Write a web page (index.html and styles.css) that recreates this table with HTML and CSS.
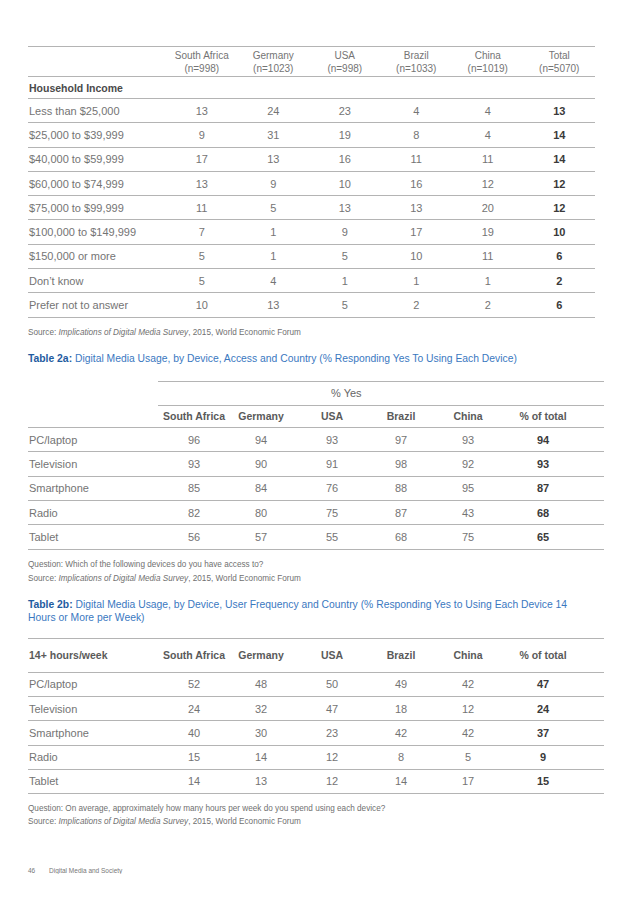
FILE: index.html
```html
<!DOCTYPE html>
<html>
<head>
<meta charset="utf-8">
<link rel="stylesheet" href="styles.css">
</head>
<body>
<div class="page">
  <div class="t1">
    <div class="r1 head">
      <div></div>
      <div>South Africa<br>(n=998)</div>
      <div>Germany<br>(n=1023)</div>
      <div>USA<br>(n=998)</div>
      <div>Brazil<br>(n=1033)</div>
      <div>China<br>(n=1019)</div>
      <div>Total<br>(n=5070)</div>
    </div>
    <div class="r1 group"><div class="lbl">Household Income</div></div>
    <div class="r1 data"><div class="lbl">Less than $25,000</div><div>13</div><div>24</div><div>23</div><div>4</div><div>4</div><div class="tot">13</div></div>
    <div class="r1 data"><div class="lbl">$25,000 to $39,999</div><div>9</div><div>31</div><div>19</div><div>8</div><div>4</div><div class="tot">14</div></div>
    <div class="r1 data"><div class="lbl">$40,000 to $59,999</div><div>17</div><div>13</div><div>16</div><div>11</div><div>11</div><div class="tot">14</div></div>
    <div class="r1 data"><div class="lbl">$60,000 to $74,999</div><div>13</div><div>9</div><div>10</div><div>16</div><div>12</div><div class="tot">12</div></div>
    <div class="r1 data"><div class="lbl">$75,000 to $99,999</div><div>11</div><div>5</div><div>13</div><div>13</div><div>20</div><div class="tot">12</div></div>
    <div class="r1 data"><div class="lbl">$100,000 to $149,999</div><div>7</div><div>1</div><div>9</div><div>17</div><div>19</div><div class="tot">10</div></div>
    <div class="r1 data"><div class="lbl">$150,000 or more</div><div>5</div><div>1</div><div>5</div><div>10</div><div>11</div><div class="tot">6</div></div>
    <div class="r1 data"><div class="lbl">Don’t know</div><div>5</div><div>4</div><div>1</div><div>1</div><div>1</div><div class="tot">2</div></div>
    <div class="r1 data"><div class="lbl">Prefer not to answer</div><div>10</div><div>13</div><div>5</div><div>2</div><div>2</div><div class="tot">6</div></div>
  </div>
  <p class="note src1">Source: <i>Implications of Digital Media Survey</i>, 2015, World Economic Forum</p>

  <p class="title t2a-title"><b>Table 2a:</b> Digital Media Usage, by Device, Access and Country (% Responding Yes To Using Each Device)</p>
  <div class="t2 t2a">
    <div class="r2 yes"><div></div><div class="yescell">% Yes</div></div>
    <div class="r2 head2"><div></div><div>South Africa</div><div>Germany</div><div>USA</div><div>Brazil</div><div>China</div><div>% of total</div><div></div></div>
    <div class="r2 data"><div class="lbl">PC/laptop</div><div>96</div><div>94</div><div>93</div><div>97</div><div>93</div><div class="tot">94</div><div></div></div>
    <div class="r2 data"><div class="lbl">Television</div><div>93</div><div>90</div><div>91</div><div>98</div><div>92</div><div class="tot">93</div><div></div></div>
    <div class="r2 data"><div class="lbl">Smartphone</div><div>85</div><div>84</div><div>76</div><div>88</div><div>95</div><div class="tot">87</div><div></div></div>
    <div class="r2 data"><div class="lbl">Radio</div><div>82</div><div>80</div><div>75</div><div>87</div><div>43</div><div class="tot">68</div><div></div></div>
    <div class="r2 data"><div class="lbl">Tablet</div><div>56</div><div>57</div><div>55</div><div>68</div><div>75</div><div class="tot">65</div><div></div></div>
  </div>
  <p class="note q2a">Question: Which of the following devices do you have access to?</p>
  <p class="note s2a">Source: <i>Implications of Digital Media Survey</i>, 2015, World Economic Forum</p>

  <p class="title t2b-title"><b>Table 2b:</b> Digital Media Usage, by Device, User Frequency and Country (% Responding Yes to Using Each Device 14 Hours or More per Week)</p>
  <div class="t2 t2b">
    <div class="r2 head3"><div class="lbl">14+ hours/week</div><div>South Africa</div><div>Germany</div><div>USA</div><div>Brazil</div><div>China</div><div>% of total</div><div></div></div>
    <div class="r2 data"><div class="lbl">PC/laptop</div><div>52</div><div>48</div><div>50</div><div>49</div><div>42</div><div class="tot">47</div><div></div></div>
    <div class="r2 data"><div class="lbl">Television</div><div>24</div><div>32</div><div>47</div><div>18</div><div>12</div><div class="tot">24</div><div></div></div>
    <div class="r2 data"><div class="lbl">Smartphone</div><div>40</div><div>30</div><div>23</div><div>42</div><div>42</div><div class="tot">37</div><div></div></div>
    <div class="r2 data"><div class="lbl">Radio</div><div>15</div><div>14</div><div>12</div><div>8</div><div>5</div><div class="tot">9</div><div></div></div>
    <div class="r2 data"><div class="lbl">Tablet</div><div>14</div><div>13</div><div>12</div><div>14</div><div>17</div><div class="tot">15</div><div></div></div>
  </div>
  <p class="note q2b">Question: On average, approximately how many hours per week do you spend using each device?</p>
  <p class="note s2b">Source: <i>Implications of Digital Media Survey</i>, 2015, World Economic Forum</p>

  <div class="footer"><span class="pnum">46</span><span>Digital Media and Society</span></div>
</div>
</body>
</html>
```

FILE: styles.css
```css
html, body {
  margin: 0;
  padding: 0;
  background: #ffffff;
}
body {
  font-family: "Liberation Sans", Arial, sans-serif;
  color: #747474;
}
.page {
  padding: 46px 0 0 28px;
  width: 576px;
}
p { margin: 0; }

/* Table 1 */
.t1 {
  width: 567px;
  border-top: 1px solid #b4b4b4;
}
.r1 {
  display: grid;
  grid-template-columns: 138px repeat(6, 1fr);
  align-items: center;
  border-bottom: 1px solid #b4b4b4;
  font-size: 11px;
}
.r1 > div { text-align: center; }
.r1 > .lbl { text-align: left; }
.r1.head {
  height: 29px;
  font-size: 10px;
  line-height: 13px;
}
.r1.group {
  height: 21px;
  font-size: 11px;
}
.r1.group .lbl {
  color: #4a4a4a;
  font-weight: bold;
  font-size: 10.5px;
}
.data {
  height: 23.3px;
}
.lbl { padding-left: 1px; }
.tot {
  color: #3a3a3a;
  font-weight: bold;
}

/* Notes */
.note {
  font-size: 8.2px;
  line-height: 12px;
  color: #707070;
}
.src1 { margin-top: 9px; }
.title {
  font-size: 10.35px;
  line-height: 13.5px;
  color: #3a78bf;
}
.title b { color: #1f5b9f; }
.t2a-title { margin-top: 13px; }
.t2b-title { max-width: 556px; }

/* Tables 2 */
.t2 { width: 576px; }
.r2 {
  display: grid;
  grid-template-columns: 130px 72px 62px 80px 58px 76px 74px 1fr;
  align-items: center;
  font-size: 11px;
  border-bottom: 1px solid #b4b4b4;
}
.r2 > div { text-align: center; }
.r2 > .lbl { text-align: left; }
.t2a { margin-top: 16px; }
.r2.yes {
  border-bottom: none;
  grid-template-columns: 130px 1fr;
  height: 24px;
}
.yescell {
  height: 23px;
  line-height: 23px;
  border-top: 1px solid #b4b4b4;
  border-bottom: 1px solid #b4b4b4;
  text-align: left !important;
  padding-left: 173px;
  color: #666;
}
.head2 {
  height: 22px;
  color: #555;
}
.head2 > div, .head3 > div {
  font-weight: bold;
  font-size: 10.5px;
  color: #5a5a5a;
}
.q2a { margin-top: 8px; line-height: 14px; }
.s2a { line-height: 14px; }
.t2b-title { margin-top: 12px; }
.t2b {
  margin-top: 13px;
  border-top: 1px solid #b4b4b4;
}
.head3 { height: 33px; }
.q2b { margin-top: 8px; line-height: 13px; }
.s2b { line-height: 13px; }

.footer {
  margin-top: 39px;
  font-size: 6.5px;
  color: #777;
  display: flex;
}
.pnum { width: 21px; }
```
